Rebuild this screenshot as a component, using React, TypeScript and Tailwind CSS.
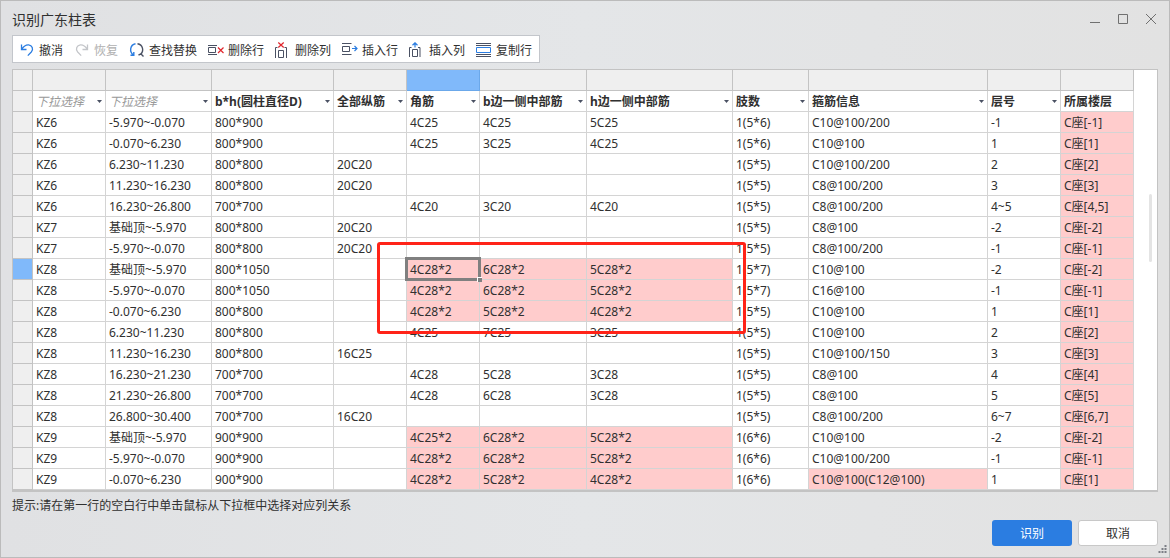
import { useState } from 'react'
import type { ReactNode } from 'react'
import clsx from 'clsx'

type Column = { title?: string; menu: boolean; width: string }

const COLUMNS: Column[] = [
  { menu: true, width: 'w-[73px]' },
  { menu: true, width: 'w-[106px]' },
  { title: 'b*h(圆柱直径D)', menu: true, width: 'w-[122px]' },
  { title: '全部纵筋', menu: true, width: 'w-[73px]' },
  { title: '角筋', menu: true, width: 'w-[73px]' },
  { title: 'b边一侧中部筋', menu: true, width: 'w-[107px]' },
  { title: 'h边一侧中部筋', menu: true, width: 'w-[146px]' },
  { title: '肢数', menu: true, width: 'w-[76px]' },
  { title: '箍筋信息', menu: true, width: 'w-[179px]' },
  { title: '层号', menu: true, width: 'w-[73px]' },
  { title: '所属楼层', menu: false, width: 'w-[73px]' },
]

const ROWS: string[][] = [
  ['KZ6', '-5.970~-0.070', '800*900', '', '4C25', '4C25', '5C25', '1(5*6)', 'C10@100/200', '-1', 'C座[-1]'],
  ['KZ6', '-0.070~6.230', '800*900', '', '4C25', '3C25', '4C25', '1(5*6)', 'C10@100', '1', 'C座[1]'],
  ['KZ6', '6.230~11.230', '800*800', '20C20', '', '', '', '1(5*5)', 'C10@100/200', '2', 'C座[2]'],
  ['KZ6', '11.230~16.230', '800*800', '20C20', '', '', '', '1(5*5)', 'C8@100/200', '3', 'C座[3]'],
  ['KZ6', '16.230~26.800', '700*700', '', '4C20', '3C20', '4C20', '1(5*5)', 'C8@100/200', '4~5', 'C座[4,5]'],
  ['KZ7', '基础顶~-5.970', '800*800', '20C20', '', '', '', '1(5*5)', 'C8@100', '-2', 'C座[-2]'],
  ['KZ7', '-5.970~-0.070', '800*800', '20C20', '', '', '', '1(5*5)', 'C8@100/200', '-1', 'C座[-1]'],
  ['KZ8', '基础顶~-5.970', '800*1050', '', '4C28*2', '6C28*2', '5C28*2', '1(5*7)', 'C10@100', '-2', 'C座[-2]'],
  ['KZ8', '-5.970~-0.070', '800*1050', '', '4C28*2', '6C28*2', '5C28*2', '1(5*7)', 'C16@100', '-1', 'C座[-1]'],
  ['KZ8', '-0.070~6.230', '800*800', '', '4C28*2', '5C28*2', '4C28*2', '1(5*5)', 'C10@100', '1', 'C座[1]'],
  ['KZ8', '6.230~11.230', '800*800', '', '4C25', '7C25', '3C25', '1(5*5)', 'C10@100', '2', 'C座[2]'],
  ['KZ8', '11.230~16.230', '800*800', '16C25', '', '', '', '1(5*5)', 'C10@100/150', '3', 'C座[3]'],
  ['KZ8', '16.230~21.230', '700*700', '', '4C28', '5C28', '3C28', '1(5*5)', 'C8@100', '4', 'C座[4]'],
  ['KZ8', '21.230~26.800', '700*700', '', '4C28', '6C28', '3C28', '1(5*5)', 'C8@100', '5', 'C座[5]'],
  ['KZ8', '26.800~30.400', '700*700', '16C20', '', '', '', '1(5*5)', 'C8@100/200', '6~7', 'C座[6,7]'],
  ['KZ9', '基础顶~-5.970', '900*900', '', '4C25*2', '6C28*2', '5C28*2', '1(6*6)', 'C10@100', '-2', 'C座[-2]'],
  ['KZ9', '-5.970~-0.070', '900*900', '', '4C28*2', '6C28*2', '5C28*2', '1(6*6)', 'C10@100/200', '-1', 'C座[-1]'],
  ['KZ9', '-0.070~6.230', '900*900', '', '4C28*2', '5C28*2', '4C28*2', '1(6*6)', 'C10@100(C12@100)', '1', 'C座[1]'],
]

// Cells the recogniser could not parse, plus the whole floor column
function isFlagged(value: string, col: number) {
  if (col === 10) return true
  if (col >= 4 && col <= 6) return value.includes('*')
  return col === 8 && value.includes('(')
}

function Icon({ children }: { children: ReactNode }) {
  return (
    <svg viewBox="0 0 16 16" className="size-4 shrink-0" fill="none" stroke="#4a5163" aria-hidden="true">
      {children}
    </svg>
  )
}

const TOOLS: { label: string; disabled?: boolean; icon: ReactNode }[] = [
  {
    label: '撤消',
    icon: <path stroke="#2b7de1" strokeWidth="1.3" d="M2.5 2.5v5H7.500M2.800 7.200C5 3.800 7.400 2.700 9.600 2.900c3.600.300 5.200 4.400 2.700 7.100L8.800 13.600" />,
  },
  {
    label: '恢复',
    disabled: true,
    icon: <path stroke="#c4c6ca" strokeWidth="1.3" d="M13.500 2.500v5H8.500M13.200 7.200C11 3.800 8.600 2.700 6.400 2.900c-3.600.300-5.200 4.400-2.700 7.100L7.200 13.600" />,
  },
  {
    label: '查找替换',
    icon: (
      <>
        <path stroke="#2b7de1" strokeWidth="1.4" d="M6.500 1.800C.8 3 .2 9.800 4.300 12.800M1.500 13.300h3.300V10" />
        <path strokeWidth="1.4" d="M8.500 1.800c5.400.700 6.800 7.200 3 10.400L9.500 13M11.500 11.500l3 3" />
      </>
    ),
  },
  {
    label: '删除行',
    icon: (
      <>
        <path d="M0 3.500h9M.5 5.500h7v5h-7zM0 12.500h9" />
        <path stroke="#e0262d" strokeWidth="1.200" d="m10 5.500 5.500 5.500m0-5.500L10 11" />
      </>
    ),
  },
  {
    label: '删除列',
    icon: (
      <>
        <path d="M.5 16V5.500H2.500M3.500 15.500v-7h5v7zM9.500 5.500h2V16" />
        <path stroke="#e0262d" strokeWidth="1.200" d="m3.300.5 5.400 5m0-5-5.400 5" />
      </>
    ),
  },
  {
    label: '插入行',
    icon: (
      <>
        <path d="M0 1.500h9.500M.5 4.500h7v5h-7zM0 12.500h9.500" />
        <path stroke="#2b7de1" strokeWidth="1.200" d="M10 6.500h5M12.500 4 15 6.500 12.500 9" />
      </>
    ),
  },
  {
    label: '插入列',
    icon: (
      <>
        <path d="M.5 15V5.500H2.500M3.500 14.500v-7h5v7zM9 5.500h2V15" />
        <path stroke="#2b7de1" strokeWidth="1.200" d="M6 5.500V.8M3.500 3.200 6 .8l2.500 2.400" />
      </>
    ),
  },
  {
    label: '复制行',
    icon: (
      <>
        <path d="M0 1.500h15M0 3.500h15M0 12.500h15M0 14.500h15" />
        <path stroke="#2b7de1" d="M.5 5.500h14v5H.5z" />
      </>
    ),
  },
]

function ColumnHeader({ column, index }: { column: Column; index: number }) {
  if (!column.menu) return <span className="block px-[3px] pt-px text-left font-bold">{column.title}</span>
  return (
    <div className="relative">
      <select
        aria-label={`第${index + 1}列`}
        className={clsx(
          'block h-5 w-full appearance-none bg-transparent px-[3px] pt-px outline-none',
          column.title ? 'font-bold' : 'font-normal text-[#999] italic',
        )}
      >
        <option>{column.title ?? '下拉选择'}</option>
      </select>
      <svg viewBox="0 0 5 3" className="pointer-events-none absolute top-[9px] right-[3px] h-[3px] w-[5px]" aria-hidden="true">
        <path d="M0 0h5L2.500 3z" fill="#4a5163" />
      </svg>
    </div>
  )
}

export default function App() {
  const [selected, setSelected] = useState({ row: 7, col: 4 })

  return (
    <div className="flex min-h-screen flex-col border border-[#bbbbbb] bg-linear-to-r from-[#e0e1e3] via-[#e4e6e8] to-[#e2e2e2] px-[11px] font-['Noto_Sans','Noto_Sans_CJK_SC',sans-serif] text-xs text-[#303030]">
      {/* Title bar */}
      <header className="flex h-[34px] items-center justify-between pt-1">
        <h1 className="text-sm leading-5">识别广东柱表</h1>
        <div className="flex gap-3 text-[#707070]">
          <button type="button" aria-label="最小化" className="size-4">
            <svg viewBox="0 0 16 16" fill="none" stroke="currentColor"><path d="M4 10.500h10" /></svg>
          </button>
          <button type="button" aria-label="最大化" className="size-4">
            <svg viewBox="0 0 16 16" fill="none" stroke="currentColor"><path d="M4.500 2.500h9v9h-9z" /></svg>
          </button>
          <button type="button" aria-label="关闭" className="size-4">
            <svg viewBox="0 0 16 16" fill="none" stroke="currentColor"><path d="m4 2 10 10m0-10L4 12" /></svg>
          </button>
        </div>
      </header>

      {/* Toolbar */}
      <div className="flex h-7 items-center gap-[11px] self-start border border-[#c3c6cb] bg-white pt-0.5 pr-[7px] pl-1.5">
        {TOOLS.map((tool) => (
          <button
            key={tool.label}
            type="button"
            disabled={tool.disabled}
            className="flex items-center gap-1 whitespace-nowrap disabled:text-[#b0b0b0]"
          >
            <Icon>{tool.icon}</Icon>
            <span className="pt-0.5">{tool.label}</span>
          </button>
        ))}
      </div>

      {/* Sheet */}
      <div className="mt-1.5 flex justify-between border border-b-2 border-[#c3c3c3] bg-white">
        <div className="relative">
          <table className="table-fixed border-separate border-spacing-0 leading-[18px]">
            <colgroup>
              <col className="w-5" />
              {COLUMNS.map((column, i) => <col key={i} className={column.width} />)}
            </colgroup>
            <thead>
              <tr className="h-[21px]">
                <td className="border-r border-b border-[#c3c3c3] bg-[#efefef] p-0" />
                {COLUMNS.map((_, col) => (
                  <td
                    key={col}
                    className={clsx(
                      'border-r border-b p-0',
                      col === selected.col ? 'border-[#6ba8ea] bg-[#80b9fa]' : 'border-[#c3c3c3] bg-[#efefef]',
                    )}
                  />
                ))}
              </tr>
              <tr className="h-[21px]">
                <td className="border-r border-b border-[#c3c3c3] bg-[#efefef] p-0" />
                {COLUMNS.map((column, i) => (
                  <th key={i} scope="col" className="border-r border-b border-[#d4d4d4] p-0">
                    <ColumnHeader column={column} index={i} />
                  </th>
                ))}
              </tr>
            </thead>
            <tbody>
              {ROWS.map((cells, row) => (
                <tr key={row} className="h-[21px]">
                  <td
                    className={clsx(
                      'border-r border-b border-[#c3c3c3] p-0',
                      row === selected.row ? 'bg-[#80b9fa]' : 'bg-[#efefef]',
                    )}
                  />
                  {cells.map((value, col) => {
                    const active = row === selected.row && col === selected.col
                    return (
                      <td
                        key={col}
                        onClick={() => setSelected({ row, col })}
                        className={clsx(
                          'border-r border-b border-[#d4d4d4] px-[3px] pt-0.5 pb-0 whitespace-nowrap',
                          isFlagged(value, col) && 'bg-[#ffcccc]',
                          active && 'relative z-10',
                        )}
                      >
                        {value}
                        {active && (
                          <span className="pointer-events-none absolute -inset-0.5 border-3 border-[#808080]">
                            <span className="absolute -right-1 -bottom-1 size-[5px] border-t border-l border-white bg-[#808080]" />
                          </span>
                        )}
                      </td>
                    )
                  })}
                </tr>
              ))}
            </tbody>
          </table>
          {/* Callout around the rows that need attention */}
          <div className="pointer-events-none absolute top-[172px] left-[364px] z-20 h-[92px] w-[369px] rounded-[3px] border-3 border-[#ff2318]" />
        </div>
        <div className="flex w-2 flex-col">
          <div className="mt-[124px] h-[68px] w-[3px] rounded-full bg-[#e4e4e4]" />
        </div>
      </div>

      <p className="mt-1 leading-5">提示:请在第一行的空白行中单击鼠标从下拉框中选择对应列关系</p>

      <footer className="relative mt-1 flex justify-end gap-1.5">
        <button type="button" className="h-[26px] w-20 rounded-[3px] bg-[#2b7de1] pt-0.5 text-white">识别</button>
        <button type="button" className="h-[26px] w-20 rounded-[3px] border border-[#c8c8c8] bg-white pt-0.5">取消</button>
        <svg viewBox="0 0 9 9" className="absolute -right-[9px] -bottom-2 size-[9px]" fill="#7c7f86" aria-hidden="true">
          <path d="M6.500 0h2v2h-2zM3.500 3h2v2h-2zM6.500 3h2v2h-2zM.5 6h2v2h-2zM3.500 6h2v2h-2zM6.500 6h2v2h-2z" />
        </svg>
      </footer>
    </div>
  )
}
